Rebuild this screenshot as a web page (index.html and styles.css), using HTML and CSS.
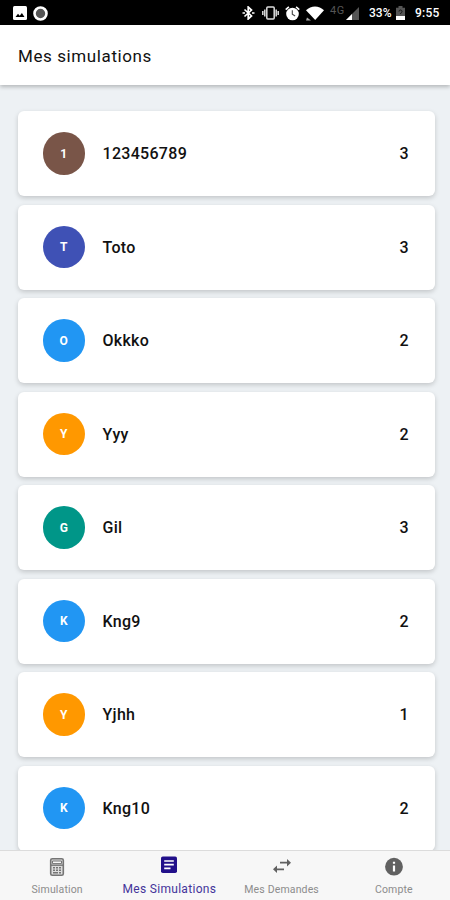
FILE: index.html
```html
<!DOCTYPE html>
<html lang="fr">
<head>
<meta charset="utf-8">
<meta name="viewport" content="width=device-width">
<title>Mes simulations</title>
<link rel="stylesheet" href="styles.css">
</head>
<body>
<div class="app">
  <div class="status">
    <svg class="s-image" width="14" height="14" viewBox="0 0 14 14"><rect width="14" height="14" rx="1.5" fill="#fff"/><path d="M2.5 11 5 7.8 6.7 9.7 8.9 7 11.5 11z" fill="#000"/></svg>
    <svg class="s-dot" width="15" height="15" viewBox="0 0 15 15"><circle cx="7.5" cy="7.5" r="6" fill="#555" stroke="#fff" stroke-width="2.6"/></svg>
    <svg class="s-bt" width="13" height="14" viewBox="0 0 13 14" fill="none" stroke="#fff" stroke-width="1.7"><path d="M2.5 3.5 9.5 10 6.2 13V1L9.5 4 2.5 10.5"/><path d="M.5 7h2.5M10 7h2.5"/></svg>
    <svg class="s-vib" width="17" height="14" viewBox="0 0 17 14" fill="none" stroke="#ddd" stroke-width="1.5"><rect x="4.8" y="1" width="7.4" height="12" rx="1"/><path d="M2.8 3.5v7M.8 5v4M14.2 3.5v7M16.2 5v4"/></svg>
    <svg class="s-alarm" width="15" height="15" viewBox="0 0 15 15"><circle cx="7.5" cy="8" r="6.3" fill="#fff"/><path d="m.7 3.7 3.2-2.8M14.3 3.7l-3.2-2.8" stroke="#fff" stroke-width="1.6"/><path d="M7.3 4.2v4l2.8 1.8" fill="none" stroke="#444" stroke-width="1.1"/></svg>
    <svg class="s-wifi" width="18" height="15" viewBox="0 0 18 15"><path d="M0 4.3C5-.9 13-.9 18 4.3L9.2 14z" fill="#fff"/><path d="M0 14.5 1 11.5 5 14.5z" fill="#aaa"/></svg>
    <span class="net">4G</span>
    <svg class="s-signal" width="13" height="13" viewBox="0 0 13 13"><path d="M0 13 13 0v13z" fill="#555"/><path d="M0 13 6 7v6z" fill="#fff"/></svg>
    <span class="pct">33%</span>
    <svg class="s-bat" width="9" height="14" viewBox="0 0 9 14"><path d="M0 1.7h2.5V0h4v1.7H9V14H0z" fill="#555"/><path d="M3 5.5c0-2 3-2 3 0C6 7 4.5 6.5 4.5 8" fill="none" stroke="#111"/><path d="M0 10h9v4H0z" fill="#fff"/></svg>
    <span class="time">9:55</span>
  </div>
  <header class="header"><h1>Mes simulations</h1></header>
  <main class="list">
    <div class="card"><span class="avatar brown">1</span><span class="name">123456789</span><span class="count">3</span></div>
    <div class="card"><span class="avatar indigo">T</span><span class="name">Toto</span><span class="count">3</span></div>
    <div class="card"><span class="avatar blue">O</span><span class="name">Okkko</span><span class="count">2</span></div>
    <div class="card"><span class="avatar orange">Y</span><span class="name">Yyy</span><span class="count">2</span></div>
    <div class="card"><span class="avatar teal">G</span><span class="name">Gil</span><span class="count">3</span></div>
    <div class="card"><span class="avatar blue">K</span><span class="name">Kng9</span><span class="count">2</span></div>
    <div class="card"><span class="avatar orange">Y</span><span class="name">Yjhh</span><span class="count">1</span></div>
    <div class="card"><span class="avatar blue">K</span><span class="name">Kng10</span><span class="count">2</span></div>
  </main>
  <nav class="tabs">
    <a class="tab">
      <svg width="20" height="20" viewBox="0 0 20 20"><rect x="3.7" y="1.7" width="12.6" height="16.6" rx="1.6" fill="#ddd" stroke="#757575" stroke-width="1.6"/><path d="M5.5 4h9v2.6h-9z" fill="#f7f7f7" stroke="#757575" stroke-width="1"/><path d="M4 8.2h12" stroke="#757575" stroke-width="1.4"/><path d="M6 10.8h2M9 10.8h2M12 10.8h2M6 13.3h2M9 13.3h2M12 13.3h2M6 15.8h5M12 15.8h2" stroke="#757575" stroke-width="1.4"/></svg>
      <span>Simulation</span>
    </a>
    <a class="tab active">
      <svg width="20" height="20" viewBox="0 0 20 20"><rect x="2" y="1.5" width="16" height="16.5" rx="1.8" fill="#22108a"/><path d="M5.2 6h9.6M5.2 9.7h9.6M5.2 13.4h6.3" stroke="#fff" stroke-width="1.7"/></svg>
      <span>Mes Simulations</span>
    </a>
    <a class="tab">
      <svg width="20" height="20" viewBox="0 0 20 20" fill="#616161"><path d="M8 4.8h7V2l4 3.7-4 3.7V6.6H8zM12 13.2H5v2.8L1 12.3l4-3.7v2.8h7z"/></svg>
      <span>Mes Demandes</span>
    </a>
    <a class="tab">
      <svg width="20" height="20" viewBox="0 0 20 20"><circle cx="10" cy="9.7" r="8.9" fill="#616161"/><path d="M8.9 4.7h2.2v2.1H8.900zM8.900 8.500h2.200v6H8.900z" fill="#fff"/></svg>
      <span>Compte</span>
    </a>
  </nav>
</div>
</body>
</html>
```
FILE: styles.css
```css
* { box-sizing: border-box; }
body { margin: 0; font-family: Roboto, "Liberation Sans", sans-serif; color: #111; }
.app { display: flex; flex-direction: column; width: 450px; height: 900px; overflow: hidden; background: #edf1f4; }

.status { flex: none; display: flex; align-items: center; height: 25px; padding: 1px 10px 0 12.5px; background: #000; color: #fff; }
.status svg { flex: none; display: block; }
.s-dot { margin-left: 6px; }
.s-bt { margin-left: auto; }
.s-vib { margin-left: 7px; }
.s-alarm { margin-left: 6.5px; }
.s-wifi { margin-left: 6px; }
.net { width: 16px; margin-left: 6px; font-size: 11px; line-height: 12px; padding-bottom: 4px; letter-spacing: .5px; color: #555; }
.s-signal { margin-left: 0; }
.pct { width: 24px; margin-left: 10px; font-size: 12px; font-weight: 500; white-space: nowrap; }
.s-bat { margin-left: 3px; }
.time { width: 25px; margin-left: 10px; font-size: 12px; font-weight: 500; letter-spacing: .2px; }

.header { flex: none; position: relative; display: flex; align-items: center; height: 60px; padding: 1px 18px 0; background: #fff; box-shadow: 0 2px 4px rgba(0, 0, 0, .24); }
.header h1 { margin: 0; font-size: 17px; font-weight: 400; letter-spacing: .6px; }

.list { flex: 1; min-height: 0; overflow: hidden; display: flex; flex-direction: column; gap: 8.5px; padding: 26px 15.5px 0 17.5px; }
.card { flex: none; display: flex; align-items: center; height: 85px; padding: 0 26px 0 25px; border-radius: 6px; background: #fff; box-shadow: 0 2px 5px rgba(0, 0, 0, .18); }
.avatar { display: flex; align-items: center; justify-content: center; width: 42.5px; height: 42.5px; border-radius: 50%; color: #fff; font-size: 12px; font-weight: 700; }
.name { flex: 1; margin-left: 17.5px; font-size: 16px; font-weight: 500; letter-spacing: .3px; }
.count { font-size: 16px; font-weight: 500; }
.brown { background: #795548; }
.indigo { background: #3f51b5; }
.blue { background: #2196f3; }
.orange { background: #ff9800; }
.teal { background: #009688; }

.tabs { flex: none; display: flex; height: 50px; padding-left: 1px; border-top: 1px solid #dcdcdc; background: #f7f7f7; }
.tab { flex: 1 1 0; min-width: 0; display: flex; flex-direction: column; align-items: center; padding-top: 6px; font-size: 10.5px; line-height: 14px; letter-spacing: .15px; color: #8c8c8c; white-space: nowrap; }
.tab span { margin-top: 6px; }
.tab.active { padding-top: 4px; font-size: 12px; letter-spacing: .3px; color: #44349a; }
.tab.active span { margin-top: 7px; }
```
